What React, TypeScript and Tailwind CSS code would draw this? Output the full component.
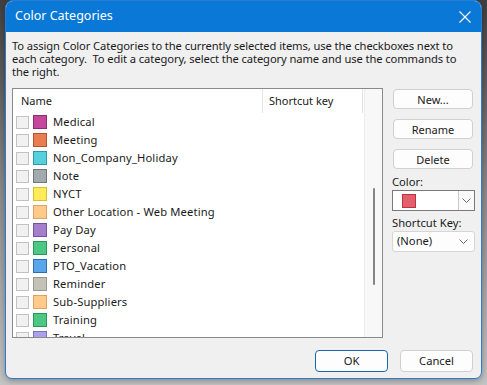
import { useState } from 'react'

type Category = { name: string; fill: string; edge: string }

const CATEGORIES: Category[] = [
  { name: 'Medical', fill: '#c3479a', edge: '#8e2a6d' },
  { name: 'Meeting', fill: '#ea7c52', edge: '#b9532c' },
  { name: 'Non_Company_Holiday', fill: '#55d0dc', edge: '#2a9aa6' },
  { name: 'Note', fill: '#a2aaae', edge: '#6d7579' },
  { name: 'NYCT', fill: '#fdec58', edge: '#d6c230' },
  { name: 'Other Location - Web Meeting', fill: '#fdca8c', edge: '#e0a260' },
  { name: 'Pay Day', fill: '#a47fca', edge: '#7552a0' },
  { name: 'Personal', fill: '#4fc784', edge: '#2a9a5a' },
  { name: 'PTO_Vacation', fill: '#5aa6ea', edge: '#2a70b8' },
  { name: 'Reminder', fill: '#c3c2b8', edge: '#98978c' },
  { name: 'Sub-Suppliers', fill: '#fdca8c', edge: '#e0a260' },
  { name: 'Training', fill: '#4fc784', edge: '#2a9a5a' },
  { name: 'Travel', fill: '#aaa2ea', edge: '#7a72c0' },
]

const FONT = { fontFamily: '"Noto Sans", "Open Sans", sans-serif' }

function Chevron() {
  return (
    <svg width="9" height="5" viewBox="0 0 9 5" fill="none">
      <path d="M0.5 0.5 L4.5 4.5 L8.5 0.5" stroke="#6b6b6b" strokeWidth="1" />
    </svg>
  )
}

function SideButton({ label }: { label: string }) {
  return (
    <button className="h-[20px] w-[80px] rounded-[4px] border border-[#d0d0d0] bg-[#fdfdfd] text-[11px] leading-none text-[#1a1a1a]">
      {label}
    </button>
  )
}

export default function App() {
  const [checked, setChecked] = useState<Record<string, boolean>>({})

  return (
    <div
      className="h-[385px] w-[487px] overflow-hidden bg-gradient-to-b from-[#3f3f3f] via-[#8a8a8a] to-[#c4c4c4]"
      style={FONT}
    >
      <div className="ml-[5px] flex h-[379px] w-[477px] flex-col overflow-hidden rounded-t-[8px] rounded-b-[7px] border border-[#2a7bd1] bg-[#f0f0f0] shadow-[0_2px_6px_rgba(0,0,0,0.3)]">
        {/* title bar */}
        <div className="flex h-[31px] shrink-0 items-center justify-between bg-[#0a78d6] pl-[9px] pr-[10px] text-white">
          <span className="text-[12.5px]">Color Categories</span>
          <svg width="12" height="12" viewBox="0 0 12 12">
            <path d="M0.5 0.5 L11.5 11.5 M11.5 0.5 L0.5 11.5" stroke="white" strokeWidth="1.1" />
          </svg>
        </div>

        <div className="flex flex-1 flex-col px-[6px] pt-[7px] text-[#1a1a1a]">
          <p className="text-[11.2px] leading-[13px] tracking-[-0.1px]">
            To assign Color Categories to the currently selected items, use the checkboxes next to each category.&nbsp; To edit a category, select the category name and use the commands to the right.
          </p>

          <div className="mt-[10px] flex gap-[9px]">
            {/* list */}
            <div className="flex h-[250px] w-[371px] overflow-hidden border border-[#8a8a8a] bg-white">
              <div className="flex w-[351px] flex-col">
                <div className="flex h-[24px] shrink-0 items-center text-[11px]">
                  <div className="flex h-full w-[250px] items-center border-r border-[#e5e5e5] pl-[8px]">Name</div>
                  <div className="flex h-full w-[100px] items-center border-r border-[#e5e5e5] pl-[6px]">Shortcut key</div>
                </div>
                {CATEGORIES.map((c) => (
                  <div key={c.name} className="flex h-[18px] shrink-0 items-center text-[11.2px]">
                    <button
                      onClick={() => setChecked((s) => ({ ...s, [c.name]: !s[c.name] }))}
                      className="ml-[3px] h-[13px] w-[13px] border border-[#c2c2c2] bg-[#f1f1f1]"
                    />
                    <div
                      className="ml-[4px] h-[14px] w-[14px] border"
                      style={{ background: c.fill, borderColor: c.edge }}
                    />
                    <span className="ml-[6px] tracking-[0.15px]">{c.name}</span>
                  </div>
                ))}
              </div>
              <div className="relative flex-1 border-l border-[#ececec] bg-[#f8f8f8]">
                <div className="absolute left-[8px] top-[99px] h-[97px] w-[2px] rounded-full bg-[#868686]" />
              </div>
            </div>

            {/* commands */}
            <div className="flex flex-col">
              <div className="mt-[1px] flex flex-col gap-[10px] pl-[1px]">
                <SideButton label="New..." />
                <SideButton label="Rename" />
                <SideButton label="Delete" />
              </div>
              <span className="mt-[6px] text-[11.2px] leading-[14px]">Color:</span>
              <div className="mt-[1px] flex h-[21px] w-[83px] border border-[#7a7a7a] bg-white">
                <div className="flex flex-1 items-center pl-[9px]">
                  <div className="h-[14px] w-[14px] border border-[#c0303e] bg-[#e2606c]" />
                </div>
                <div className="flex w-[16px] items-center justify-center border-l border-[#c8c8c8] bg-[#fafafa]">
                  <Chevron />
                </div>
              </div>
              <span className="mt-[5px] text-[11.2px] leading-[14px]">Shortcut Key:</span>
              <div className="mt-[1px] flex h-[21px] w-[83px] items-center justify-between rounded-[3px] border border-[#d6d6d6] bg-[#fdfdfd] pl-[4px] pr-[6px] text-[11.2px]">
                <span>(None)</span>
                <Chevron />
              </div>
            </div>
          </div>

          <div className="mt-[12px] flex justify-end gap-[12px] pr-[2px]">
            <button className="h-[22px] w-[73px] rounded-[4px] border border-[#1a64b0] bg-[#fdfdfd] text-[11.2px]">OK</button>
            <button className="h-[22px] w-[73px] rounded-[4px] border border-[#d0d0d0] bg-[#fdfdfd] text-[11.2px]">Cancel</button>
          </div>
        </div>
      </div>
    </div>
  )
}
